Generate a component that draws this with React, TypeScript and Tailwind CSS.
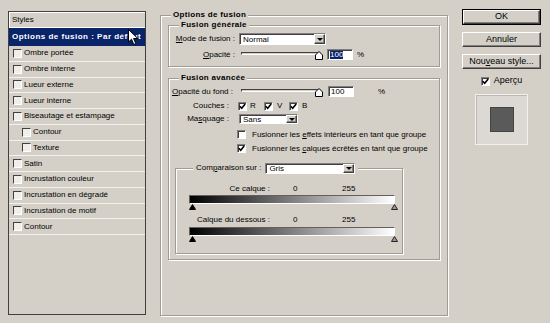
import type { ReactNode } from "react";

const sunken =
  "border border-t-[#808080] border-l-[#808080] border-b-white border-r-white shadow-[inset_1px_1px_0_#404040]";
const raised =
  "border border-t-white border-l-white border-b-[#404040] border-r-[#404040] shadow-[inset_-1px_-1px_0_#808080]";
const etched = "border border-[#a09c94] shadow-[inset_1px_1px_0_#fff,1px_1px_0_#fff]";

const layerStyles: { label: string; nested?: boolean }[] = [
  { label: "Ombre portée" },
  { label: "Ombre interne" },
  { label: "Lueur externe" },
  { label: "Lueur interne" },
  { label: "Biseautage et estampage" },
  { label: "Contour", nested: true },
  { label: "Texture", nested: true },
  { label: "Satin" },
  { label: "Incrustation couleur" },
  { label: "Incrustation en dégradé" },
  { label: "Incrustation de motif" },
  { label: "Contour" },
];

function Check({ checked = false }: { checked?: boolean }) {
  return (
    <span className={`flex h-[9px] w-[9px] shrink-0 items-center justify-center bg-white ${sunken}`}>
      {checked ? (
        <svg width="7" height="7" viewBox="0 0 7 7">
          <path d="M0.8 3.2 L2.7 5.2 L6.2 1" fill="none" stroke="#000" strokeWidth="1.6" />
        </svg>
      ) : null}
    </span>
  );
}

function Select(props: { value: string; className: string }) {
  return (
    <div className={`flex items-center bg-white ${sunken} ${props.className}`}>
      <span className="flex-1 pl-[3px] leading-[9px]">{props.value}</span>
      <span className={`flex h-full w-[11px] items-center justify-center bg-[#d4d0c8] ${raised}`}>
        <span className="h-0 w-0 border-x-[3px] border-t-[3px] border-x-transparent border-t-black" />
      </span>
    </div>
  );
}

function Slider() {
  return (
    <div className="relative h-[11px] w-[82px]">
      <div className="absolute left-0 right-[2px] top-[3px] h-[3px] border border-t-[#404040] border-l-[#404040] border-b-white border-r-white bg-[#d4d0c8]" />
      <svg className="absolute right-0 top-[2px]" width="8" height="9" viewBox="0 0 8 9">
        <path d="M4 0.5 L7.5 4 L7.5 8.5 L0.5 8.5 L0.5 4 Z" fill="#fff" stroke="#000" />
      </svg>
    </div>
  );
}

function GroupBox(props: { title?: ReactNode; className: string; children: ReactNode }) {
  return (
    <div className={`relative ${etched} ${props.className}`}>
      {props.title ? (
        <div className="absolute left-[10px] top-[-6px] bg-[#d4d0c8] px-[2px] font-bold leading-[10px] tracking-[0.3px]">
          {props.title}
        </div>
      ) : null}
      {props.children}
    </div>
  );
}

function Gradient() {
  return (
    <>
      <div className="ml-[13px] h-[9px] w-[206px] border border-t-[#606060] border-l-[#606060] border-b-white border-r-white bg-[linear-gradient(to_right,#000,#fff)]" />
      <div className="ml-[13px] flex h-[6px] w-[209px] justify-between">
        <svg width="7" height="6" viewBox="0 0 7 6">
          <path d="M3.5 0.5 L6.5 5.5 L0.5 5.5 Z" fill="#000" stroke="#000" />
        </svg>
        <svg width="7" height="6" viewBox="0 0 7 6">
          <path d="M3.5 0.5 L6.5 5.5 L0.5 5.5 Z" fill="#9a9a9a" stroke="#222" />
        </svg>
      </div>
    </>
  );
}

function Button(props: { children: ReactNode; isDefault?: boolean; className: string }) {
  return (
    <div className={props.isDefault ? `border border-black ${props.className}` : props.className}>
      <div className={`flex h-full w-full items-center justify-center bg-[#d4d0c8] ${raised}`}>{props.children}</div>
    </div>
  );
}

export default function App() {
  return (
    <div className="relative flex h-[323px] w-[550px] items-start overflow-hidden bg-[#d4d0c8] font-['Liberation_Sans',Arial,sans-serif] text-[8px] text-black">
      {/* liste des styles */}
      <div className="ml-[8px] mt-[11px] flex h-[304px] w-[138px] flex-col border border-[#404040]">
        <div className="flex h-[16px] items-center border-b border-white pl-[3px] shadow-[inset_1px_1px_0_#fff]">Styles</div>
        <div className="flex h-[18px] items-center overflow-hidden whitespace-nowrap bg-[#0a246a] pl-[3px] font-bold tracking-[0.5px] text-white">
          Options de fusion : Par défaut
        </div>
        {layerStyles.map((s, i) => (
          <div
            key={i}
            className={`flex h-[15.75px] items-center gap-[2px] border-b border-[#f3f2ee] ${s.nested ? "pl-[13px]" : "pl-[4px]"}`}
          >
            <span className="h-[9px] w-[9px] shrink-0 border border-t-[#404040] border-l-[#404040] border-b-white border-r-white bg-[#efeee9]" />
            <span className="whitespace-nowrap">{s.label}</span>
          </div>
        ))}
      </div>

      {/* options de fusion */}
      <GroupBox title="Options de fusion" className="ml-[14px] mt-[15px] h-[301px] w-[288px]">
        <GroupBox title="Fusion générale" className="mx-[7px] mt-[9px] h-[42px] pt-[7px]">
          <div className="flex h-[12px] items-center">
            <span className="w-[66px] text-right whitespace-nowrap">
              <u>M</u>ode de fusion :
            </span>
            <Select value="Normal" className="ml-[4px] h-[12px] w-[87px]" />
          </div>
          <div className="mt-[4px] flex h-[11px] items-center">
            <span className="w-[66px] text-right whitespace-nowrap">
              <u>O</u>pacité :
            </span>
            <div className="ml-[6px]">
              <Slider />
            </div>
            <div className={`ml-[4px] flex h-[11px] w-[26px] items-center bg-white pl-[2px] ${sunken}`}>
              <span className="bg-[#0a246a] leading-[8px] text-white">100</span>
            </div>
            <span className="ml-[4px]">%</span>
          </div>
        </GroupBox>

        <GroupBox title="Fusion avancée" className="mx-[7px] mt-[11px] h-[182px] pt-[7px]">
          <div className="flex h-[11px] items-center">
            <span className="w-[64px] text-right whitespace-nowrap">
              <u>O</u>pacité du fond :
            </span>
            <div className="ml-[8px]">
              <Slider />
            </div>
            <div className={`ml-[5px] flex h-[11px] w-[26px] items-center bg-white pl-[2px] ${sunken}`}>100</div>
            <span className="ml-[24px]">%</span>
          </div>
          <div className="mt-[4px] flex h-[10px] items-center">
            <span className="w-[60px] text-right">Couches :</span>
            <span className="ml-[9px] flex w-[26px] items-center gap-[3px]">
              <Check checked />R
            </span>
            <span className="flex w-[25px] items-center gap-[4px]">
              <Check checked />V
            </span>
            <span className="flex items-center gap-[4px]">
              <Check checked />B
            </span>
          </div>
          <div className="mt-[3px] flex h-[10px] items-center">
            <span className="w-[60px] text-right whitespace-nowrap">
              Ma<u>s</u>quage :
            </span>
            <Select value="Sans" className="ml-[10px] h-[10px] w-[59px]" />
          </div>
          <div className="ml-[68px] mt-[6px] flex h-[9px] items-center gap-[6px] whitespace-nowrap">
            <Check />
            <span>
              Fusionner les <u>e</u>ffets intérieurs en tant que groupe
            </span>
          </div>
          <div className="ml-[68px] mt-[5px] flex h-[9px] items-center gap-[6px] whitespace-nowrap">
            <Check checked />
            <span>
              Fusionner les <u>c</u>alques écrêtés en tant que groupe
            </span>
          </div>

          <GroupBox className="ml-[6px] mt-[15px] h-[86px] w-[228px]">
            <div className="absolute left-[17px] top-[-7px] flex items-center bg-[#d4d0c8] px-[3px]">
              <span className="whitespace-nowrap">
                Com<u>p</u>araison sur :
              </span>
              <Select value="Gris" className="ml-[4px] h-[11px] w-[90px]" />
            </div>
            <div className="mt-[15px] flex h-[10px] items-center whitespace-nowrap">
              <span className="w-[94px] text-right">Ce calque :</span>
              <span className="ml-[23px] w-[5px]">0</span>
              <span className="ml-[44px]">255</span>
            </div>
            <div className="mt-[1px]">
              <Gradient />
            </div>
            <div className="mt-[5px] flex h-[10px] items-center whitespace-nowrap">
              <span className="w-[94px] text-right">Calque du dessous :</span>
              <span className="ml-[23px] w-[5px]">0</span>
              <span className="ml-[44px]">255</span>
            </div>
            <div className="mt-[2px]">
              <Gradient />
            </div>
          </GroupBox>
        </GroupBox>
      </GroupBox>

      {/* boutons */}
      <div className="ml-[14px] mt-[9px] flex w-[79px] flex-col items-center text-[9px]">
        <Button isDefault className="h-[16px] w-[79px]">
          OK
        </Button>
        <Button className="mt-[7px] h-[15px] w-[79px]">Annuler</Button>
        <Button className="mt-[7px] h-[15px] w-[79px]">
          <span className="whitespace-nowrap">
            Nou<u>v</u>eau style...
          </span>
        </Button>
        <div className="mt-[7px] flex h-[10px] items-center gap-[4px]">
          <Check checked />
          <span>
            Aper<u>ç</u>u
          </span>
        </div>
        <div className="mt-[8px] flex h-[51px] w-[53px] items-center justify-center border border-[#f2f1ee] bg-[#dcd9d4] shadow-[inset_1px_1px_0_#bdb9b2]">
          <div className="h-[25px] w-[24px] border border-[#444] bg-[#5a5a5a]" />
        </div>
      </div>

      {/* curseur */}
      <svg className="absolute left-[128px] top-[29px]" width="11" height="17" viewBox="0 0 11 17">
        <path d="M0.5 0.5 L0.5 13 L3.5 10.2 L5.8 15.5 L7.8 14.6 L5.6 9.5 L9.8 9.5 Z" fill="#fff" stroke="#000" />
      </svg>
    </div>
  );
}
